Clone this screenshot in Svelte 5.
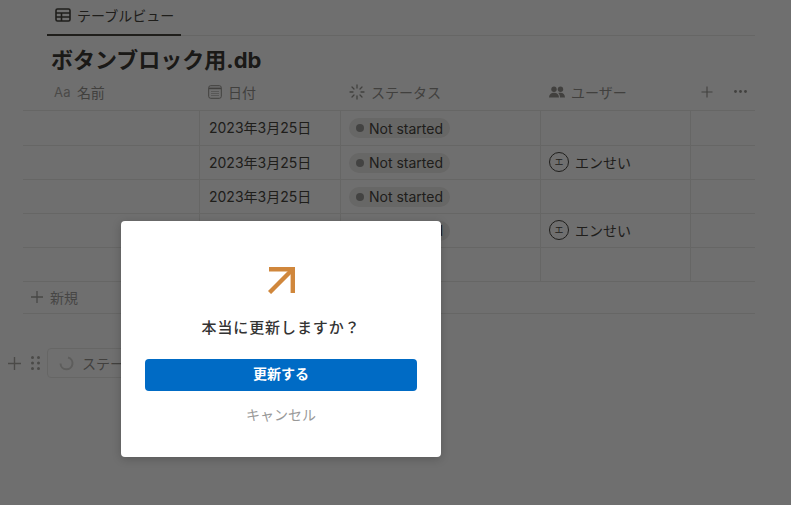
<script>
  const rows = [
    { user: false },
    { user: true },
    { user: false },
    { user: true },
    { empty: true }
  ];
</script>

<div class="page">
  <div class="tabs">
    <div class="tab">
      <svg width="16" height="14" viewBox="0 0 16 14" fill="none" stroke="currentColor" stroke-width="1.6">
        <rect x="1" y="1" width="14" height="12" rx="1.5"></rect>
        <path d="M1 5h14M1 9h14M6.5 5v8"></path>
      </svg>
      <span>テーブルビュー</span>
    </div>
  </div>

  <h1>ボタンブロック用.db</h1>

  <div class="table">
    <div class="row head">
      <div class="cell">
        <span class="aa">Aa</span><span>名前</span>
      </div>
      <div class="cell">
        <svg width="14" height="14" viewBox="0 0 14 14" fill="none" stroke="currentColor">
          <rect x="0.7" y="0.7" width="12.6" height="12.6" rx="2"></rect>
          <path d="M1 3.4h12" stroke-width="1.6"></path>
          <path d="M3.5 6.5h7M3.5 8.5h7M3.5 10.5h7" stroke-width="1" stroke-dasharray="1 1"></path>
        </svg>
        <span>日付</span>
      </div>
      <div class="cell">
        <svg width="16" height="16" viewBox="0 0 16 16" fill="none" stroke="currentColor" stroke-width="1.3" stroke-linecap="round">
          <path d="M8 1v3M8 12v3M1 8h3M12 8h3M3 3l2 2M11 11l2 2M3 13l2-2M11 5l2-2"></path>
        </svg>
        <span>ステータス</span>
      </div>
      <div class="cell">
        <svg width="16" height="12" viewBox="0 0 16 12" fill="currentColor">
          <circle cx="5" cy="3.2" r="2.7"></circle>
          <circle cx="11.5" cy="3.2" r="2.7"></circle>
          <path d="M0 11.500c0-3 2-4.700 5-4.700s5 1.700 5 4.700zM11 11.500c0-2-.6-3.500-1.800-4.500.7-.2 1.500-.3 2.300-.3 2.700 0 4.500 1.700 4.500 4.800z"></path>
        </svg>
        <span>ユーザー</span>
      </div>
      <div class="cell tools">
        <svg width="12" height="12" viewBox="0 0 12 12" stroke="currentColor" stroke-width="1.1">
          <path d="M6 .5v11M.5 6h11"></path>
        </svg>
        <svg width="13" height="3" viewBox="0 0 13 3" fill="currentColor">
          <circle cx="1.500" cy="1.500" r="1.400"></circle>
          <circle cx="6.500" cy="1.500" r="1.400"></circle>
          <circle cx="11.500" cy="1.500" r="1.400"></circle>
        </svg>
      </div>
    </div>

    {#each rows as row}
      <div class="row">
        <div class="cell"></div>
        <div class="cell date">{row.empty ? '' : '2023年3月25日'}</div>
        <div class="cell">
          {#if !row.empty}
            <span class="pill"><i></i>Not started</span>
          {/if}
        </div>
        <div class="cell">
          {#if row.user}
            <span class="avatar">エ</span><span>エンせい</span>
          {/if}
        </div>
        <div class="cell"></div>
      </div>
    {/each}

    <div class="new-row">
      <svg width="12" height="12" viewBox="0 0 12 12" stroke="currentColor" stroke-width="1.300">
        <path d="M6 0v12M0 6h12"></path>
      </svg>
      <span>新規</span>
    </div>
  </div>

  <div class="block-row">
    <svg class="block-plus" width="13" height="13" viewBox="0 0 13 13" stroke="currentColor" stroke-width="1.400">
      <path d="M6.500 0v13M0 6.500h13"></path>
    </svg>
    <svg class="grip" width="9" height="14" viewBox="0 0 9 14" fill="currentColor">
      <circle cx="1.500" cy="1.500" r="1.500"></circle>
      <circle cx="7.500" cy="1.500" r="1.500"></circle>
      <circle cx="1.500" cy="7" r="1.500"></circle>
      <circle cx="7.500" cy="7" r="1.500"></circle>
      <circle cx="1.500" cy="12.500" r="1.500"></circle>
      <circle cx="7.500" cy="12.500" r="1.500"></circle>
    </svg>
    <div class="block-button">
      <svg width="15" height="15" viewBox="0 0 15 15" fill="none" stroke="currentColor" stroke-width="2">
        <path d="M9 1.500a6 6 0 1 1-7.500 6"></path>
      </svg>
      <span>ステータス更新</span>
    </div>
  </div>

  <div class="overlay">
    <div class="dialog">
      <svg class="arrow" width="27" height="27" viewBox="0 0 27 27" fill="none" stroke="#d0873c" stroke-width="4.4">
        <path d="M1 2.200H24.800V26"></path>
        <path d="M24 3L1.500 25.500"></path>
      </svg>
      <p>本当に更新しますか？</p>
      <button class="primary">更新する</button>
      <button class="cancel">キャンセル</button>
    </div>
  </div>
</div>

<style>
  :global(body) {
    margin: 0;
    background: #fff;
  }

  .page {
    position: relative;
    width: 791px;
    height: 505px;
    overflow: hidden;
    box-sizing: border-box;
    font-family: Inter, "Noto Sans CJK JP", sans-serif;
    color: #37352f;
    background: #fff;
  }

  .tabs {
    margin: 0 36px 0 47px;
    height: 36px;
    box-sizing: border-box;
    border-bottom: 1px solid #e9e9e7;
  }

  .tab {
    display: flex;
    align-items: center;
    gap: 6px;
    width: 134px;
    height: 36px;
    box-sizing: border-box;
    padding: 0 8px 5px;
    border-bottom: 2px solid #37352f;
    font-size: 14px;
    color: #37352f;
    white-space: nowrap;
  }

  .tab svg {
    flex: none;
  }

  h1 {
    margin: 9px 0 0 51px;
    height: 30px;
    font-size: 22px;
    line-height: 30px;
    font-weight: 700;
    color: #2b2925;
  }

  .table {
    margin: 0 36px 0 23px;
  }

  .row {
    display: grid;
    grid-template-columns: 177px 141px 200px 150px 64px;
    height: 34px;
    box-sizing: border-box;
    border-bottom: 1px solid #e9e9e7;
    font-size: 14px;
  }

  .head {
    height: 36px;
    color: #8d8b86;
  }

  .row:nth-child(2) {
    height: 35px;
  }

  .cell {
    display: flex;
    align-items: center;
    gap: 6px;
    padding: 0 8px 2px;
    box-sizing: border-box;
    border-right: 1px solid #e9e9e7;
    white-space: nowrap;
  }

  .cell.date {
    padding-left: 9px;
  }

  .cell:last-child {
    border-right: none;
  }

  .row:not(.head) .cell {
    color: #37352f;
  }

  .head .cell {
    border-right: none;
  }

  .head .cell:first-child {
    padding-left: 31px;
  }

  .head svg {
    flex: none;
  }

  .aa {
    font-size: 13px;
    letter-spacing: 0.3px;
    color: #a5a39e;
  }

  .tools {
    gap: 21px;
    padding-left: 10px;
  }

  .pill {
    display: inline-flex;
    align-items: center;
    gap: 5px;
    height: 20px;
    margin-top: 2px;
    padding: 0 7px;
    border-radius: 10px;
    background: #ebeae8;
    font-size: 14px;
    color: #37352f;
  }

  .pill i {
    width: 8px;
    height: 8px;
    border-radius: 50%;
    background: #91918e;
  }

  .avatar {
    display: inline-flex;
    align-items: center;
    justify-content: center;
    width: 18px;
    height: 18px;
    border: 1px solid #37352f;
    border-radius: 50%;
    font-size: 9px;
    flex: none;
  }

  .new-row {
    display: flex;
    align-items: center;
    gap: 7px;
    height: 32px;
    box-sizing: border-box;
    padding: 0 0 2px 8px;
    border-bottom: 1px solid #e9e9e7;
    font-size: 14px;
    color: #9b9a97;
  }

  .block-row {
    display: flex;
    align-items: center;
    margin: 34px 0 0 8px;
    height: 30px;
  }

  .block-plus {
    color: #a5a39e;
  }

  .grip {
    margin-left: 10px;
    color: #a5a39e;
  }

  .block-button {
    display: flex;
    align-items: center;
    gap: 8px;
    margin-left: 7px;
    width: 160px;
    height: 30px;
    box-sizing: border-box;
    padding-left: 11px;
    border: 1px solid #e9e9e7;
    border-radius: 4px;
    font-size: 14px;
    color: #8d8b86;
    white-space: nowrap;
  }

  .block-button svg {
    color: #d3d2cf;
  }

  .overlay {
    position: absolute;
    inset: 0;
    background: rgba(15, 15, 15, 0.6);
  }

  .dialog {
    position: absolute;
    left: 121px;
    top: 221px;
    width: 320px;
    height: 236px;
    box-sizing: border-box;
    display: flex;
    flex-direction: column;
    align-items: center;
    padding-top: 46px;
    background: #fff;
    border-radius: 4px;
    box-shadow: 0 2px 10px rgba(0, 0, 0, 0.2);
  }

  .arrow {
    display: block;
  }

  .dialog p {
    margin: 22px 0 0;
    font-size: 15px;
    line-height: 24px;
    font-weight: 500;
    letter-spacing: 0.9px;
    color: #333;
  }

  .primary {
    margin-top: 19px;
    width: 272px;
    height: 32px;
    padding: 0 0 4px;
    border: none;
    border-radius: 4px;
    background: #006bc5;
    color: #fff;
    font-family: inherit;
    font-size: 14px;
    font-weight: 700;
  }

  .cancel {
    margin-top: 12px;
    padding: 0;
    border: none;
    background: none;
    font-family: inherit;
    font-size: 14px;
    line-height: 24px;
    color: #999;
  }
</style>
